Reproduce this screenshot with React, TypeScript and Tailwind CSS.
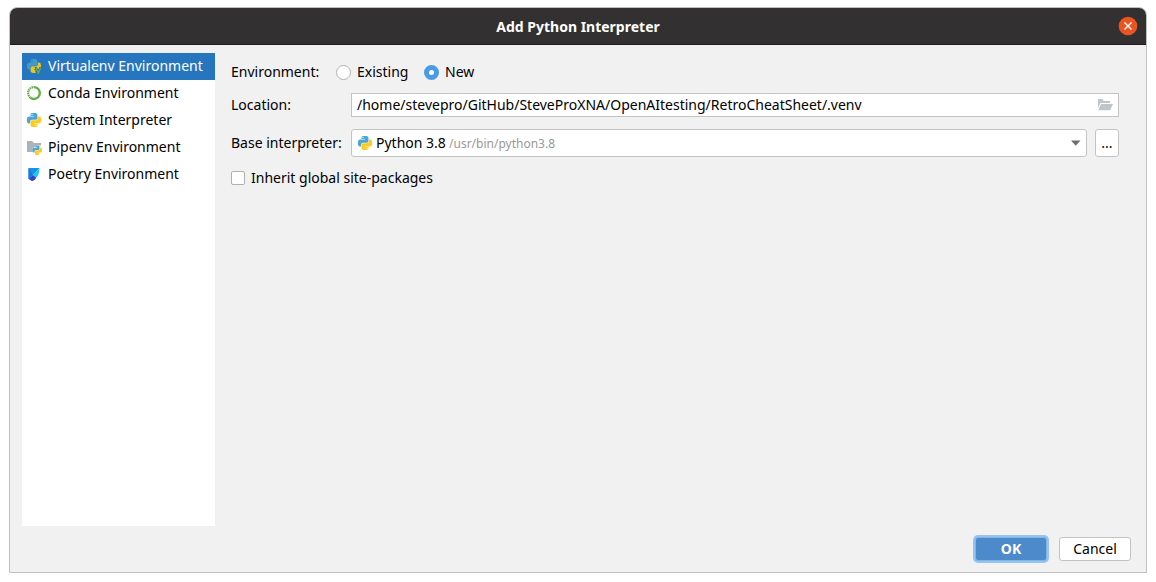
import { useState, type ReactNode } from "react";

const SNAKE =
  "M14.25.18l.9.2.73.26.59.3.45.32.34.34.25.34.16.33.1.3.04.26.02.2-.01.13V8.5l-.05.63-.13.55-.21.46-.26.38-.3.31-.33.25-.35.19-.35.14-.33.1-.3.07-.26.04-.21.02H8.77l-.69.05-.59.14-.5.22-.41.27-.33.32-.27.35-.2.36-.15.37-.1.35-.07.32-.04.27-.02.21v3.06H3.17l-.21-.03-.28-.07-.32-.12-.35-.18-.36-.26-.36-.36-.35-.46-.32-.59-.28-.73-.21-.88-.14-1.05-.05-1.23.06-1.22.16-1.04.24-.87.32-.71.36-.57.4-.44.42-.33.42-.24.4-.16.36-.1.32-.05.24-.01h.16l.06.01h8.16v-.83H6.18l-.01-2.75-.02-.37.05-.34.11-.31.17-.28.25-.26.31-.23.38-.2.44-.18.51-.15.58-.12.64-.1.71-.06.77-.04.84-.02 1.27.05zm-6.3 1.98l-.23.33-.08.41.08.41.23.34.33.22.41.09.41-.09.33-.22.23-.34.08-.41-.08-.41-.23-.33-.33-.22-.41-.09-.41.09z";

function Snakes({ blue = "#4ba6d3", yellow = "#fccb1b" }: { blue?: string; yellow?: string }) {
  return (
    <>
      <path d={SNAKE} fill={blue} />
      <path d={SNAKE} fill={yellow} transform="rotate(180 12 12)" />
    </>
  );
}

function PythonIcon() {
  return (
    <svg viewBox="-1.5 -1.5 27 27" className="size-4 shrink-0" aria-hidden="true">
      <Snakes />
    </svg>
  );
}

function VirtualenvIcon() {
  return (
    <svg viewBox="0 0 16 16" className="size-4 shrink-0" aria-hidden="true">
      <g transform="translate(1 1) scale(.58)">
        <Snakes blue="#409ccd" yellow="#f1c21d" />
      </g>
      <path d="M8.6 9h2.1l1.5 2.6L13.6 9H16v7H10.2z" fill="#2675bf" />
      <path d="M9.9 9.8l2.4 5.2 2.4-5.2" fill="none" stroke="#5fae4c" strokeWidth="1.5" />
    </svg>
  );
}

function CondaIcon() {
  return (
    <svg viewBox="0 0 16 16" className="size-4 shrink-0" fill="none" stroke="#5fb446" aria-hidden="true">
      <path d="M8 2.1A5.9 5.9 0 1 1 4.4 12.7" strokeWidth="2.4" />
      <path d="M4.4 12.7A5.9 5.9 0 0 1 8 2.1" strokeWidth="2.2" strokeDasharray="1.4 .6" />
    </svg>
  );
}

function PipenvIcon() {
  return (
    <svg viewBox="0 0 16 16" className="size-4 shrink-0" aria-hidden="true">
      <path d="M1 2h5l2 2h7v9H1z" fill="#a9b3b9" />
      <path d="M15 6.6H9.4L8.4 8.4 6.6 9.2v4.3H15z" fill="#fff" />
      <g transform="translate(6.4 6.4) scale(.4)">
        <Snakes />
      </g>
    </svg>
  );
}

function PoetryIcon() {
  return (
    <svg viewBox="0 0 16 16" className="size-4 shrink-0" aria-hidden="true">
      <path d="M2.5 2h11L6.9 8.9 2.5 13z" fill="#1f8fe6" />
      <path d="M13.5 2c0 4-1 7.200-3.300 9.800L6.900 8.900z" fill="#18c5f3" />
      <path d="M2.500 2v11L6.900 8.900z" fill="#1b78dc" />
      <path d="M2.500 13l4.400-4.100 3.300 2.900C9 13.500 7.800 14.400 6 15z" fill="#2448cf" />
      <path d="M6 15l-1-1.600 5.200-1.600C9 13.500 7.800 14.400 6 15z" fill="#5538b8" />
    </svg>
  );
}

function FolderOpenIcon() {
  return (
    <svg viewBox="0 0 16 12" className="h-3 w-4" fill="#bfc5c9" aria-hidden="true">
      <path d="M1 0h4.2l1.600 2H13v2H3.400L1 9.200z" />
      <path d="M4 5h12l-2.800 6.300H1.300z" />
    </svg>
  );
}

const environments: { name: string; icon: ReactNode }[] = [
  { name: "Virtualenv Environment", icon: <VirtualenvIcon /> },
  { name: "Conda Environment", icon: <CondaIcon /> },
  { name: "System Interpreter", icon: <PythonIcon /> },
  { name: "Pipenv Environment", icon: <PipenvIcon /> },
  { name: "Poetry Environment", icon: <PoetryIcon /> },
];

const radioClass =
  "size-[15px] appearance-none rounded-full border border-[#b0b0b0] bg-white checked:border-[5px] checked:border-[#4a9be6]";

export default function App() {
  const [selected, setSelected] = useState(0);
  const [location, setLocation] = useState("/home/stevepro/GitHub/SteveProXNA/OpenAItesting/RetroCheatSheet/.venv");

  return (
    <div className="flex h-screen bg-white px-[9px] pt-[7px] pb-[9px] font-['Noto_Sans',sans-serif] text-sm text-black">
      <main className="flex flex-1 flex-col overflow-hidden rounded-t-lg border border-[#c0c0c0] bg-[#f1f1f1]">
        <header className="grid h-[37px] shrink-0 grid-cols-[1fr_auto_1fr] items-center border-b border-[#1e1c1d] bg-[#333031] px-2">
          <h1 className="col-start-2 pt-0.5 font-bold text-white">Add Python Interpreter</h1>
          <button type="button" aria-label="Close" className="justify-self-end rounded-full">
            <svg viewBox="0 0 20 20" className="size-5" aria-hidden="true">
              <circle cx="10" cy="10" r="9.3" fill="#e95420" />
              <path d="M6.500 6.500l7 7m0-7l-7 7" stroke="#fff" strokeWidth="1.4" />
            </svg>
          </button>
        </header>

        <div className="flex min-h-0 flex-1 gap-4 pt-2 pr-[27px] pl-3">
          <nav className="flex w-[193px] shrink-0 flex-col bg-white">
            {environments.map((env, i) => (
              <button
                key={env.name}
                type="button"
                onClick={() => setSelected(i)}
                className={
                  i === selected
                    ? "flex h-[27px] items-center gap-1.5 bg-[#2675bf] pb-0.5 pl-1 whitespace-nowrap text-white"
                    : "flex h-[27px] items-center gap-1.5 pb-0.5 pl-1 whitespace-nowrap"
                }
              >
                {env.icon}
                {env.name}
              </button>
            ))}
          </nav>

          <form className="flex min-w-0 flex-1 flex-col pt-[7px]">
            <div role="radiogroup" aria-labelledby="environment-label" className="flex h-6 items-center">
              <span id="environment-label" className="w-[105px]">
                Environment:
              </span>
              <label className="flex w-[88px] items-center gap-1.5">
                <input type="radio" name="environment" className={radioClass} />
                Existing
              </label>
              <label className="flex items-center gap-1.5">
                <input type="radio" name="environment" defaultChecked className={radioClass} />
                New
              </label>
            </div>

            <div className="mt-[9px] flex items-center">
              <label htmlFor="location" className="w-[120px] shrink-0">
                Location:
              </label>
              <div className="flex h-6 min-w-0 flex-1 items-center border border-[#c4c4c4] bg-white pr-[5px]">
                <input
                  id="location"
                  value={location}
                  onChange={(e) => setLocation(e.target.value)}
                  className="min-w-0 flex-1 bg-transparent px-[5px] outline-none"
                />
                <button type="button" aria-label="Browse">
                  <FolderOpenIcon />
                </button>
              </div>
            </div>

            <div className="mt-3 flex items-center">
              <label htmlFor="base" className="w-[120px] shrink-0 whitespace-nowrap">
                Base interpreter:
              </label>
              <div className="grid h-7 min-w-0 flex-1 items-center">
                <select
                  id="base"
                  className="col-start-1 row-start-1 h-7 w-full appearance-none rounded-[3px] border border-[#c4c4c4] bg-white pl-6"
                >
                  <option>Python 3.8</option>
                </select>
                <div className="pointer-events-none col-start-1 row-start-1 flex items-center px-1.5">
                  <PythonIcon />
                  <span className="ml-[76px] flex-1 pt-0.5 text-xs text-[#999999]">/usr/bin/python3.8</span>
                  <svg viewBox="0 0 10 6" className="h-1.5 w-2.5" aria-hidden="true">
                    <path d="M0 .5h9.500L4.700 5.700z" fill="#6e6e6e" />
                  </svg>
                </div>
              </div>
              <button
                type="button"
                className="ml-2 h-7 w-6 rounded-[3px] border border-[#c4c4c4] bg-white"
                aria-label="Choose interpreter"
              >
                ...
              </button>
            </div>

            <label className="mt-[9px] flex h-6 items-center gap-1.5 self-start">
              <input
                type="checkbox"
                className="size-3.5 appearance-none rounded-[2px] border border-[#b0b0b0] bg-white checked:bg-[#4a9be6]"
              />
              Inherit global site-packages
            </label>
          </form>
        </div>

        <footer className="flex shrink-0 justify-end gap-3 pt-[11px] pr-[15px] pb-[11px]">
          <button
            type="button"
            className="h-6 w-[72px] rounded-[3px] border border-[#84b4e6] bg-[#4c8acb] font-bold text-white ring-2 ring-[#97c3f3]"
          >
            OK
          </button>
          <button type="button" className="h-6 w-[72px] rounded-[3px] border border-[#c4c4c4] bg-white">
            Cancel
          </button>
        </footer>
      </main>
    </div>
  );
}
